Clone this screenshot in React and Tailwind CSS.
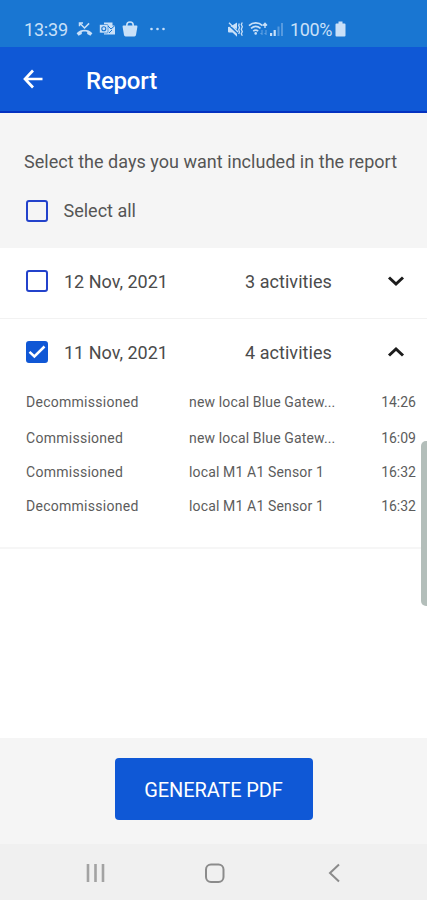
import React, { useState } from "react";

const DAYS = [
  { id: "12", date: "12 Nov, 2021", count: "3 activities", items: [] },
  {
    id: "11",
    date: "11 Nov, 2021",
    count: "4 activities",
    items: [
      { type: "Decommissioned", device: "new local Blue Gatew...", time: "14:26" },
      { type: "Commissioned", device: "new local Blue Gatew...", time: "16:09" },
      { type: "Commissioned", device: "local M1 A1 Sensor 1", time: "16:32" },
      { type: "Decommissioned", device: "local M1 A1 Sensor 1", time: "16:32" },
    ],
  },
];

function StatusBar() {
  return (
    <div className="h-[47px] shrink-0 bg-[#1976d2] pt-[11px] pl-6 flex items-center text-[#c9e0f8]">
      <span className="w-[52px] text-[18px] tracking-[-0.2px]">13:39</span>

      {/* Missed call */}
      <svg width="17" height="16" viewBox="0 0 17 16" fill="none" stroke="currentColor">
        <path d="M3.5 5.2V2H7M3.5 2l5 5 4.6-4.6" strokeWidth="1.5" />
        <path
          d="M.6 12.2c4.2-4.6 11.6-4.600 15.800 0l-2 2.500-3.200-1.800v-2c-1.800-.5-3.600-.5-5.400 0v2l-3.200 1.800z"
          fill="currentColor"
          stroke="none"
        />
      </svg>

      {/* Outlook */}
      <svg className="ml-[6px]" width="17" height="16" viewBox="0 0 17 16">
        <path d="M5 1.500h8.500v3H16v9H5z" fill="currentColor" />
        <path d="M9 5l3 3 4-3.500M10 12l3-3" stroke="#1976d2" strokeWidth="1" fill="none" />
        <rect x=".5" y="3.500" width="8.500" height="8.500" rx="1" fill="currentColor" stroke="#1976d2" strokeWidth=".6" />
        <circle cx="4.800" cy="7.800" r="2" fill="none" stroke="#1976d2" strokeWidth="1.100" />
      </svg>

      {/* Shopping bag */}
      <svg className="ml-[6px]" width="16" height="16" viewBox="0 0 16 16">
        <path d="M4.800 6V4a3.200 3 0 016.400 0v2" fill="none" stroke="currentColor" strokeWidth="1.600" />
        <path d="M1.600 4.500h12.800a1 1 0 011 1.200L14 14a1.700 1.700 0 01-1.600 1.400H3.600A1.700 1.700 0 012 14L.6 5.700a1 1 0 011-1.200z" fill="currentColor" />
      </svg>

      <svg className="ml-[11px]" width="18" height="16" viewBox="0 0 18 16" fill="currentColor">
        <circle cx="2.500" cy="8" r="1.300" />
        <circle cx="8.500" cy="8" r="1.300" />
        <circle cx="14.500" cy="8" r="1.300" />
      </svg>

      {/* Muted with vibration */}
      <svg className="ml-[60px]" width="17" height="17" viewBox="0 0 17 17">
        <path d="M3.500 5.500L10 1.500V8zM1 6l1.500-.3L10 12.800v3L5.500 11.500H2a1 1 0 01-1-1z" fill="currentColor" />
        <path d="M2 1.800l9 9.200" stroke="currentColor" strokeWidth="1.300" />
        <path d="M12.300 2.500l-.6 2 .8 2-.8 2.200.8 2.300-.8 2M15.300 1.500l-1 2 1 2.300-1 2.500 1 2.500-1 2 1 2" fill="none" stroke="currentColor" strokeWidth="1.300" />
      </svg>

      {/* Wifi */}
      <svg className="ml-[4px]" width="21" height="16" viewBox="0 0 21 16" fill="none" stroke="currentColor">
        <path d="M1 4.600c4-3.600 9.500-3.600 13.500 0M3 7.400c3-2.500 6.500-2.500 9.500 0M5.200 10.100c1.700-1.300 3.400-1.300 5 0" strokeWidth="1.700" />
        <circle cx="7.700" cy="12.400" r="1.300" fill="currentColor" stroke="none" />
        <path d="M17 7V2.500M15 4.500l2-2.300 2 2.300" strokeWidth="1.400" />
        <path d="M14 9v4.500M18 9v4.500M12.500 12l1.500 1.500M16.500 12l1.500 1.500" strokeWidth="1" opacity=".45" />
      </svg>

      {/* Mobile signal */}
      <svg className="ml-[1px]" width="14" height="16" viewBox="0 0 14 16" fill="currentColor">
        <rect x="0" y="12" width="2.200" height="3" />
        <rect x="3.600" y="9" width="2.200" height="6" />
        <rect x="7.500" y="5.500" width="2" height="9.500" opacity=".35" />
        <rect x="11" y="2" width="2" height="13" opacity=".35" />
      </svg>

      <span className="ml-[6px] w-[43px] text-[18px] tracking-[-0.4px]">100%</span>

      <svg className="ml-[2px]" width="11" height="16" viewBox="0 0 11 16" fill="currentColor">
        <path d="M3.500.5h4v2h2A1 1 0 0110.500 3.500v11a1 1 0 01-1 1h-8a1 1 0 01-1-1v-11a1 1 0 011-1h2z" />
      </svg>
    </div>
  );
}

function Checkbox({ checked, onClick }) {
  return (
    <button
      onClick={onClick}
      className={`w-[22px] h-[22px] shrink-0 rounded-[3px] border-2 flex items-center justify-center ${
        checked ? "bg-[#1057d5] border-[#1057d5]" : "border-[#2342cb]"
      }`}
    >
      {checked && (
        <svg width="18" height="18" viewBox="0 0 18 18" className="shrink-0" fill="none" stroke="#fff" strokeWidth="2.500">
          <path d="M1.500 8.800l4.900 4.700L16.500 3.500" />
        </svg>
      )}
    </button>
  );
}

function Chevron({ open }) {
  return (
    <svg width="18" height="12" viewBox="0 0 18 12" fill="none" stroke="#1c1c1c" strokeWidth="3">
      {open ? <path d="M2 9.500l7-6.500 7 6.500" /> : <path d="M2 2.500L9 9l7-6.500" />}
    </svg>
  );
}

function App() {
  const [selected, setSelected] = useState(["11"]);
  const [open, setOpen] = useState(["11"]);

  const toggle = (list, id) => (list.includes(id) ? list.filter((x) => x !== id) : [...list, id]);

  return (
    <div className="relative w-[427px] h-[900px] mx-auto flex flex-col overflow-hidden bg-white font-['Roboto',sans-serif] whitespace-nowrap">
      <StatusBar />

      {/* Header */}
      <div className="h-[66px] shrink-0 bg-[#0f58d6] border-b-2 border-[#0431c0] flex items-center pl-[23px] text-white">
        <svg width="21" height="20" viewBox="0 0 21 20" fill="none" stroke="currentColor" strokeWidth="2.700">
          <path d="M10 1.500L2 10l8 8.500M2 10h17.500" />
        </svg>
        <h1 className="ml-[42px] mt-1 text-[24px] leading-none font-medium tracking-[-0.2px]">Report</h1>
      </div>

      {/* Select all */}
      <div className="h-[135px] shrink-0 bg-[#f5f5f5] pt-[37px] text-[#555]">
        <p className="pl-6 text-[18px] leading-6 tracking-[0.03px]">Select the days you want included in the report</p>
        <div className="mt-[25px] pl-[26px] flex items-center">
          <Checkbox
            checked={selected.length === DAYS.length}
            onClick={() => setSelected(selected.length === DAYS.length ? [] : DAYS.map((d) => d.id))}
          />
          <span className="ml-[15.5px] text-[18px] leading-6">Select all</span>
        </div>
      </div>

      {/* Days */}
      <div className="flex-1 text-[#4b4b4b]">
        {DAYS.map((day) => (
          <div key={day.id} className="border-b last:border-b-2 border-[#f2f2f2] last:border-[#f6f6f6]">
            <div className="h-[66px] pl-[26px] pr-[22px] flex items-center">
              <Checkbox
                checked={selected.includes(day.id)}
                onClick={() => setSelected(toggle(selected, day.id))}
              />
              <span className="ml-4 w-[181px] text-[18px]">{day.date}</span>
              <span className="mt-px text-[18px] tracking-[0.05px]">{day.count}</span>
              <button className="ml-auto" onClick={() => setOpen(toggle(open, day.id))}>
                <Chevron open={open.includes(day.id)} />
              </button>
            </div>
            {open.includes(day.id) && day.items.length > 0 ? (
              <div className="pb-6 text-[14px] text-[#5c5c5c]">
                {day.items.map((item, i) => (
                  <div key={i} className="h-[34px] first:mb-0.5 pl-[26px] pr-[11px] flex items-center">
                    <span className="w-[163px] tracking-[0.27px]">{item.type}</span>
                    <span className="tracking-[0.15px]">{item.device}</span>
                    <span className="ml-auto">{item.time}</span>
                  </div>
                ))}
              </div>
            ) : (
              <div className="h-1" />
            )}
          </div>
        ))}
      </div>

      {/* Footer */}
      <div className="h-[106px] shrink-0 bg-[#f5f5f5] flex items-start justify-center pt-5">
        <button className="w-[198px] h-[62px] pt-0.5 rounded bg-[#0f58d6] text-white text-[20px] tracking-[-0.1px]">GENERATE PDF</button>
      </div>

      {/* Android navigation */}
      <div className="h-14 shrink-0 bg-[#f0f0f0] flex items-center pt-0.5 pl-[86px] text-[#8b8b8b]">
        <svg width="19" height="20" viewBox="0 0 19 20" fill="none" stroke="#a3a3a3" strokeWidth="2.600">
          <path d="M2 1v18M9.500 1v18M17 1v18" />
        </svg>
        <svg className="ml-[99px]" width="21" height="21" viewBox="0 0 21 21" fill="none" stroke="currentColor" strokeWidth="2">
          <rect x="2" y="1.500" width="17.500" height="17.500" rx="5" />
        </svg>
        <svg className="ml-[103px]" width="12" height="20" viewBox="0 0 12 20" fill="none" stroke="currentColor" strokeWidth="2">
          <path d="M11 1.500L2 10l9 8.500" />
        </svg>
      </div>

      {/* Edge panel handle */}
      <div className="absolute right-0 top-[441px] w-[6px] h-[165px] rounded-l-[5px] bg-[#b3beba]" />
    </div>
  );
}

export default App;
